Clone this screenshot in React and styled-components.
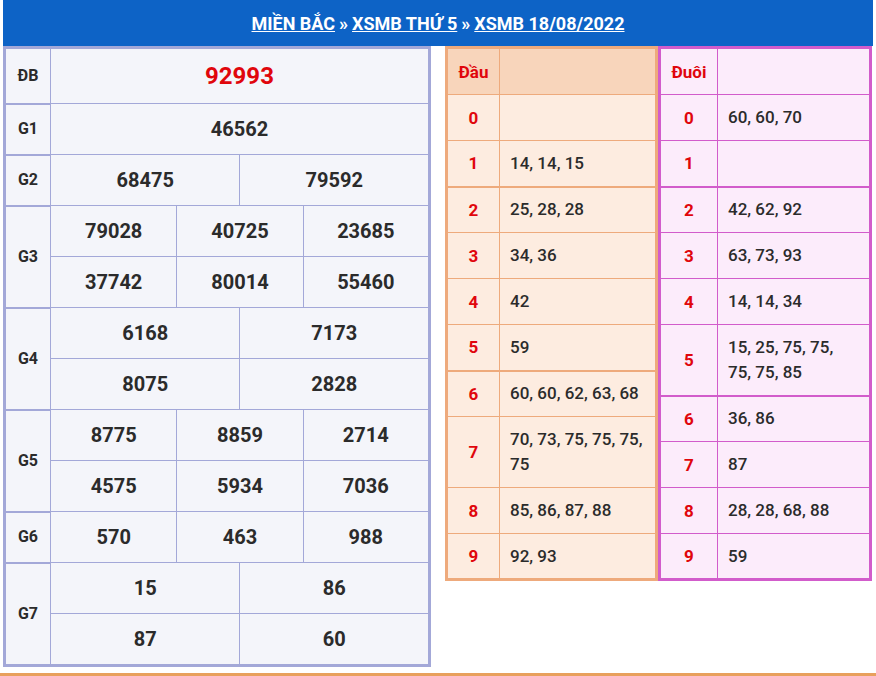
import React from 'react'
import styled, { createGlobalStyle } from 'styled-components'

const Global = createGlobalStyle`
  body { margin: 0; background: #fff; font-family: Roboto, "Liberation Sans", sans-serif; }
`;

const Page = styled.div`
  width: 876px;
  height: 676px;
  overflow: hidden;
  border-bottom: 3px solid #e8a05c;
  box-sizing: border-box;
`;
const Header = styled.div`
  height: 46px;
  background: #0d63c6;
  display: flex;
  align-items: center;
  justify-content: center;
  color: #fff;
  font-size: 18px;
  font-weight: 700;
  gap: 4px;
  margin: 0 3px;
`;
const Link = styled.a`
  color: #fff;
  text-decoration: underline;
`;
const Body = styled.div`
  display: flex;
  align-items: flex-start;
  padding: 0 4px 0 3px;
`;
const Results = styled.table`
  width: 428px;
  border-collapse: collapse;
  background: #f4f5fa;
  border: 3px solid #a3a8d8;
  table-layout: fixed;
  td { border: 1px solid #a3a8d8; text-align: center; color: #2b2b2b; padding: 0; line-height: 22px; }
`;
const Label = styled.td`
  width: 44px;
  font-size: 16px;
  font-weight: 700;
  border-bottom-width: ${p => (p.$group ? '2px' : '1px')} !important;
`;
const Num = styled.td`
  height: ${p => p.$h || 50}px;
  font-size: ${p => (p.$red ? 24 : 20)}px;
  font-weight: 700;
  color: ${p => (p.$red ? '#e0060c' : '#2b2b2b')} !important;
`;
const Side = styled.div`
  display: flex;
  margin-left: 14px;
`;
const Stat = styled.table`
  width: ${p => p.$w}px;
  border-collapse: collapse;
  table-layout: fixed;
  border: 3px solid ${p => p.$c};
  background: ${p => p.$bg};
  td { border: 1px solid ${p => p.$c}; font-size: 17px; font-weight: 500; color: #2b2b2b; padding: 0; }
  thead td { background: ${p => p.$head}; height: 45px; }
`;
const Key = styled.td`
  width: ${p => p.$w}px;
  text-align: center;
  color: #e0060c !important;
  font-weight: 700 !important;
`;
const Vals = styled.td`
  padding: 0 10px !important;
  line-height: 25px;
`;
const Row = styled.tr`
  height: ${p => (p.$tall ? 71 : 46)}px;
  td { border-top-width: ${p => (p.$split ? '2px' : '1px')}; }
`;

const prizes = [
  ['ĐB', [['92993']], 54, true],
  ['G1', [['46562']]],
  ['G2', [['68475', '79592']]],
  ['G3', [['79028', '40725', '23685'], ['37742', '80014', '55460']]],
  ['G4', [['6168', '7173'], ['8075', '2828']]],
  ['G5', [['8775', '8859', '2714'], ['4575', '5934', '7036']]],
  ['G6', [['570', '463', '988']]],
  ['G7', [['15', '86'], ['87', '60']]],
];

const dau = ['', '14, 14, 15', '25, 28, 28', '34, 36', '42', '59', '60, 60, 62, 63, 68', '70, 73, 75, 75, 75, 75', '85, 86, 87, 88', '92, 93'];
const duoi = ['60, 60, 70', '', '42, 62, 92', '63, 73, 93', '14, 14, 34', '15, 25, 75, 75, 75, 75, 85', '36, 86', '87', '28, 28, 68, 88', '59'];

const span = n => (n === 1 ? 6 : n === 2 ? 3 : 2);

const StatTable = ({ title, data, w, kw, c, bg, head, tall, split }) => (
  <Stat $w={w} $c={c} $bg={bg} $head={head}>
    <thead>
      <tr><Key $w={kw}>{title}</Key><td /></tr>
    </thead>
    <tbody>
      {data.map((v, i) => (
        <Row key={i} $tall={i === tall} $split={split.includes(i)}>
          <Key $w={kw}>{i}</Key>
          <Vals>{v}</Vals>
        </Row>
      ))}
    </tbody>
  </Stat>
);

export default function App() {
  return (
    <Page>
      <Global />
      <Header>
        <Link>MIỀN BẮC</Link>»<Link>XSMB THỨ 5</Link>»<Link>XSMB 18/08/2022</Link>
      </Header>
      <Body>
        <Results>
          <tbody>
            {prizes.flatMap(([name, rows, h, red]) =>
              rows.map((nums, ri) => (
                <tr key={name + ri}>
                  {ri === 0 && <Label rowSpan={rows.length} $group>{name}</Label>}
                  {nums.map(n => (
                    <Num key={n} colSpan={span(nums.length)} $h={h} $red={red}>{n}</Num>
                  ))}
                </tr>
              ))
            )}
          </tbody>
        </Results>
        <Side>
          <StatTable title="Đầu" data={dau} w={213} kw={51} c="#eeaa7c" bg="#fdece0" head="#f8d5bb" tall={7} split={[2, 6]} />
          <StatTable title="Đuôi" data={duoi} w={214} kw={56} c="#d25ccb" bg="#fcecfb" head="#fcecfb" tall={5} split={[2, 6]} />
        </Side>
      </Body>
    </Page>
  )
}
